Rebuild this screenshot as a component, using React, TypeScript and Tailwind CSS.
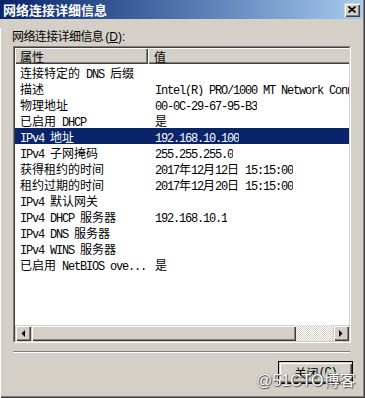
import React from "react";

const isCJK = (ch: string) => /[\u3000-\u9fff\uff00-\uffef]/.test(ch);

function Mixed({ text, u }: { text: string; u?: string }) {
  const parts: { t: string; cjk: boolean }[] = [];
  for (const ch of text) {
    const c = isCJK(ch);
    const last = parts[parts.length - 1];
    if (last && last.cjk === c) last.t += ch;
    else parts.push({ t: ch, cjk: c });
  }
  return (
    <>
      {parts.map((p, i) =>
        p.cjk ? (
          <span key={i} className="font-['Noto_Sans_CJK_SC',sans-serif] text-[12px]">
            {p.t}
          </span>
        ) : (
          <span key={i} className="font-['Liberation_Mono',monospace] text-[12px] tracking-[-1.2px]">
            {u && p.t.includes(u) ? (
              <>
                {p.t.slice(0, p.t.indexOf(u))}
                <span className="underline">{u}</span>
                {p.t.slice(p.t.indexOf(u) + 1)}
              </>
            ) : (
              p.t
            )}
          </span>
        )
      )}
    </>
  );
}

const rows: [string, string][] = [
  ["连接特定的 DNS 后缀", ""],
  ["描述", "Intel(R) PRO/1000 MT Network Connection"],
  ["物理地址", "00-0C-29-67-95-B3"],
  ["已启用 DHCP", "是"],
  ["IPv4 地址", "192.168.10.100"],
  ["IPv4 子网掩码", "255.255.255.0"],
  ["获得租约的时间", "2017年12月12日 15:15:00"],
  ["租约过期的时间", "2017年12月20日 15:15:00"],
  ["IPv4 默认网关", ""],
  ["IPv4 DHCP 服务器", "192.168.10.1"],
  ["IPv4 DNS 服务器", ""],
  ["IPv4 WINS 服务器", ""],
  ["已启用 NetBIOS ove...", "是"],
];

const raised =
  "shadow-[inset_1px_1px_0_#d4d0c8,inset_2px_2px_0_#ffffff,inset_-1px_-1px_0_#404040,inset_-2px_-2px_0_#808080]";
const headerCell =
  "shadow-[inset_1px_1px_0_#ffffff,inset_-1px_-1px_0_#404040,inset_-2px_-2px_0_#808080]";

function Arrow({ dir }: { dir: "left" | "right" }) {
  return (
    <svg width="4" height="7" viewBox="0 0 4 7">
      {dir === "left" ? (
        <polygon points="4,0 4,7 0.5,3.5" fill="#000" />
      ) : (
        <polygon points="0,0 0,7 3.5,3.5" fill="#000" />
      )}
    </svg>
  );
}

export default function App() {
  return (
    <div className="relative w-[365px] h-[398px] border-r border-b border-[#404040] bg-[#d4d0c8] select-none">
      <div className="h-full border-r border-b border-[#808080]">
        <div className="pr-[1px]">
          <div className="h-[19px] flex items-center justify-between bg-linear-to-r from-[#0a246a] to-[#a6caf0]">
            <span className="pl-[3px] text-white font-bold text-[13px] leading-[19px] font-['Noto_Sans_CJK_SC',sans-serif]">
              网络连接详细信息
            </span>
            <div className={`mr-[2px] w-[16px] h-[14px] bg-[#d4d0c8] flex items-center justify-center ${raised}`}>
              <svg width="8" height="7" viewBox="0 0 8 7" className="mb-[1px]">
                <path d="M0.5 0.5 L7.5 6.5 M7.5 0.5 L0.5 6.5" stroke="#000" strokeWidth="1.7" />
              </svg>
            </div>
          </div>
        </div>
        <div className="border-l border-white h-[376px]">
          <div className="mt-[9px] pl-[11px] h-[16px] leading-[16px] text-[12px] text-black whitespace-pre">
            <span className="font-['Noto_Sans_CJK_SC',sans-serif] tracking-[-0.6px]">网络连接详细信息 </span>
            <span className="font-['Liberation_Sans',sans-serif]">
              (<span className="underline">D</span>):
            </span>
          </div>
          <div className="mt-[2px] ml-[12px] w-[338px] h-[297px] border border-t-[#808080] border-l-[#808080] border-b-white border-r-white">
            <div className="w-full h-full border border-t-[#404040] border-l-[#404040] border-b-[#d4d0c8] border-r-[#d4d0c8] bg-white flex flex-col overflow-hidden">
              <div className="h-[16px] flex shrink-0 bg-[#d4d0c8] text-black">
                <div className={`w-[133px] shrink-0 pl-[5px] leading-[16px] ${headerCell}`}>
                  <Mixed text="属性" />
                </div>
                <div className={`w-[400px] shrink-0 pl-[6px] leading-[16px] ${headerCell}`}>
                  <Mixed text="值" />
                </div>
              </div>
              <div className="flex-1 overflow-hidden">
                {rows.map(([k, v], i) => {
                  const sel = i === 4;
                  return (
                    <div
                      key={i}
                      className={`h-[16px] leading-[16px] flex whitespace-pre ${sel ? "bg-[#0a246a] text-white" : "text-black"}`}
                    >
                      <div className="w-[140px] shrink-0 pl-[5px] overflow-hidden">
                        <Mixed text={k} />
                      </div>
                      <div className="shrink-0 overflow-hidden">
                        <Mixed text={v} />
                      </div>
                    </div>
                  );
                })}
              </div>
              <div className="h-[16px] shrink-0 flex">
                <div className={`w-[16px] h-[16px] shrink-0 bg-[#d4d0c8] flex items-center justify-center ${raised}`}>
                  <Arrow dir="left" />
                </div>
                <div className={`w-[265px] h-[16px] shrink-0 bg-[#d4d0c8] ${raised}`} />
                <div className="flex-1 h-[16px] [background:repeating-conic-gradient(#d4d0c8_0_25%,#ffffff_0_50%)_0_0/2px_2px]" />
                <div className={`w-[16px] h-[16px] shrink-0 bg-[#d4d0c8] flex items-center justify-center ${raised}`}>
                  <Arrow dir="right" />
                </div>
              </div>
            </div>
          </div>
          <div className="mt-[8px] ml-[12px] w-[337px] h-[2px] border-t border-t-[#808080] border-b border-b-white" />
          <div className="mt-[8px] ml-[277px] w-[75px] h-[23px] border border-black">
            <div className={`w-full h-full bg-[#d4d0c8] flex items-center justify-center leading-[16px] text-black whitespace-pre ${raised}`}>
              <Mixed text="关闭(C)" u="C" />
            </div>
          </div>
        </div>
      </div>
      <div className="absolute left-[256px] top-[368px] text-white text-[16px] leading-[22px] whitespace-pre [text-shadow:0_0_1px_#444,1px_1px_1px_#555]">
        <span className="font-['Liberation_Sans',sans-serif]">@51CTO</span>
        <span className="font-['Noto_Sans_CJK_SC',sans-serif]">博客</span>
      </div>
    </div>
  );
}
